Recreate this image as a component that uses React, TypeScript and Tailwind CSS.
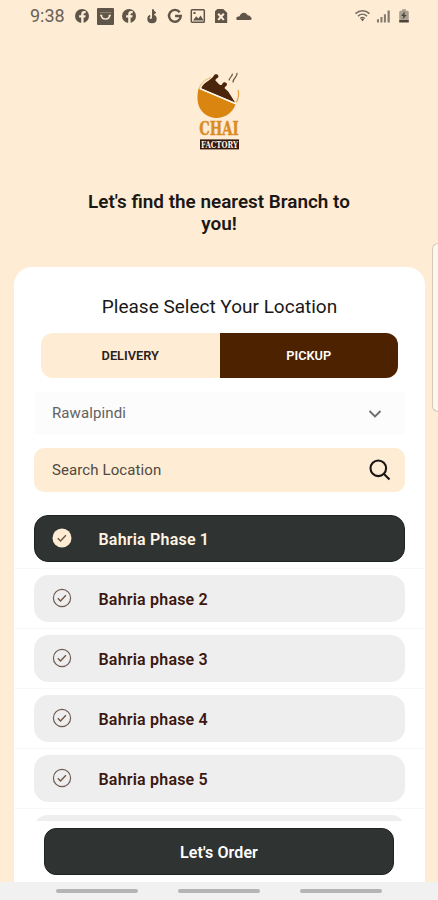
import { ReactNode } from "react"

const branches = [
  "Bahria Phase 1",
  "Bahria phase 2",
  "Bahria phase 3",
  "Bahria phase 4",
  "Bahria phase 5",
]

const Glyph = ({ children, className }: { children: ReactNode; className?: string }) => (
  <svg viewBox="0 0 16 16" className={className ?? "h-4 w-4"} fill="#5f5548">
    {children}
  </svg>
)

const FacebookGlyph = () => (
  <Glyph>
    <circle cx="8" cy="8" r="7" />
    <path d="M7.2 15V9.6H5.1V7.2h2.1V6c0-2 1.1-3.1 2.9-3.1h1.6v2.3h-1c-.8 0-1.1.4-1.1 1v1h2.1l-.4 2.4H9.6V15z" fill="#feecd4" />
  </Glyph>
)

const StatusBar = () => (
  <div className="flex h-8 items-center pl-[30px] pr-[26px] text-[#6b6257]">
    <span className="w-[44px] whitespace-nowrap text-[18px] leading-none">9:38</span>
    <div className="flex items-center gap-[7px]">
      <FacebookGlyph />
      <Glyph className="h-[17px] w-[17px]">
        <rect width="16" height="16" rx="1" />
        <path d="M2.5 4.3h11" fill="none" stroke="#8d8172" strokeWidth="1" />
        <path d="M4 6.5c.3 5.3 7.7 5.3 8 0M3 7h2M11 7h2" fill="none" stroke="#feecd4" strokeWidth="1.3" />
      </Glyph>
      <FacebookGlyph />
      <Glyph>
        <path d="M8 1.2h1.7c.3 1.8 1.2 2.5 2.4 3.1L11 6.2l-.9-.4v1.3c1.8.7 2.6 1.9 2.6 3.8A4.6 4.6 0 0 1 8 15.2a4.6 4.6 0 0 1-4.7-4.3c0-2 1-3.5 2.7-4.2l.5 2c-.9.4-1 1-.8 1.6.5 1 2.3.7 2.3-.8z" />
      </Glyph>
      <Glyph>
        <path d="M12.7 4.3A5.9 5.9 0 1 0 13.8 8H8.1" fill="none" stroke="#5f5548" strokeWidth="2.4" />
      </Glyph>
      <Glyph>
        <rect x="1.3" y="1.8" width="13" height="12.4" rx=".8" fill="none" stroke="#5f5548" strokeWidth="1.5" />
        <path d="m3 12.5 3.2-4.3 2.2 2.3 2.2-3 3 5zM3.5 4h2v2h-2z" />
      </Glyph>
      <Glyph>
        <path d="M4.4 1h5.8l4 3.8V15H2V3.3z" />
        <path d="m5.2 5.7 5.6 6.2m0-6.2-5.6 6.2" stroke="#feecd4" strokeWidth="2.1" />
      </Glyph>
      <Glyph>
        <path d="M1.6 12C0 11.7-.1 9.7 1 9c.9-.6 1.8-.8 2.6-.8.8-2 2.2-3.4 4.3-3.4 1.7 0 3 .9 3.7 2.4 1.6 0 2.8.8 3.2 2.1 1.3.7 1.1 2.4-.4 2.7z" />
      </Glyph>
    </div>
    <div className="ml-auto flex items-center gap-[5px]">
      <Glyph className="h-4 w-[17px]">
        <g fill="none" stroke="#776e63" strokeWidth="1.5">
          <path d="M1 5.6c4-3.8 10-3.8 14 0M3.4 8.2c2.7-2.5 6.5-2.5 9.2 0" />
          <path d="M5.7 10.5c1.3-1.2 3.3-1.2 4.6 0" />
        </g>
        <path d="m6.4 11.5 1.6-.9 1.6.9L8 13.3z" />
      </Glyph>
      <Glyph className="h-4 w-[15px]">
        <path d="M1 11.5h2.2V15H1zM4.7 9h2.2v6H4.7zM8.4 6h2.2v9H8.4zM12.3 2h2.4v13h-2.4z" fill="#857b6e" />
      </Glyph>
      <Glyph>
        <path d="M6 1.3h4v1.4h1.2c.9 0 1.6.7 1.6 1.6v7.1H3.2V4.3c0-.9.7-1.6 1.6-1.6H6z" fill="#aaa091" />
        <path d="M8.7 3.4 5.2 8h2.2l-.8 3.3L10.8 7H8.4zM3.2 11.8h9.6v2.7H3.2z" fill="#4c443a" />
      </Glyph>
    </div>
  </div>
)

const Logo = () => (
  <svg viewBox="0 0 46 82" className="mx-auto h-[82px] w-[46px] overflow-visible">
    {/* Cup */}
    <path d="M15 7.5C8.5 9.5 4 14 3 19.5" fill="none" stroke="#e9b566" strokeWidth="1" />
    <path d="M2.6 18.5 39.5 34.6C34.5 49.5 15 52.6 5.8 41 1 35 .6 27 2.6 18.5z" fill="#da850f" />
    <path d="M5.2 18.2c1.3-3 3.8-5.8 7.6-7.8 2.2-1.3 3.8-2.3 5.2-4.8.7-2 4.2-1.8 4.4.6.1 2.2-2.9 2-3 4.2l4.2 4.3c1.6.8 2.2.4 2.9-1.2 1.2-2.1 4.9-1.2 4.5 1.3-.4 1.9-2.6 1.7-2.4 3.5l3.6 3.2 7.1 11.2z" fill="#4b240c" />
    <path d="M3.8 18.6 39.8 33.6" stroke="#fff8e9" strokeWidth="1.3" />
    <path d="M40.2 32.5c2.5-4.2 3-8.3 1.9-12.5" fill="none" stroke="#e7a044" strokeWidth="1.2" />
    {/* Steam */}
    <g fill="none" stroke="#6b5542" strokeWidth="1.2">
      <path d="M33.3 10.5c-.8-3.1 3.8-3.6 3-6.8M37 12.5c-.8-4.4 5-5.2 4-9.7" />
    </g>
    <text x="3.3" y="65" textLength="39.5" lengthAdjust="spacingAndGlyphs" fill="#da8b22" stroke="#da8b22" strokeWidth=".4" className="font-['DejaVu_Serif',serif] text-[18px] font-bold">CHAI</text>
    <rect x="4" y="69.4" width="39" height="10" fill="#35180d" />
    <text x="5" y="77.8" textLength="37" lengthAdjust="spacingAndGlyphs" fill="#fff4e3" className="font-['DejaVu_Serif',serif] text-[9.5px] font-bold">FACTORY</text>
  </svg>
)

const CheckCircle = ({ active }: { active: boolean }) => (
  <svg viewBox="0 0 20 20" className="relative -top-px h-5 w-5 shrink-0" fill="none">
    <circle cx="10" cy="10" r={active ? 9.5 : 8.6} fill={active ? "#feecd4" : "none"} stroke={active ? "none" : "#6e5d53"} strokeWidth="1.2" />
    <path d="m5.8 10.3 2.7 2.6 5.4-5.7" stroke="#6e5543" strokeWidth="1.4" />
  </svg>
)

const BranchRow = ({ name, active }: { name: string; active: boolean }) => (
  <div className="border-b border-[#f8f8f8] px-5 py-1.5">
    <div
      className={
        active
          ? "flex h-[47px] items-center rounded-[14px] border border-[#1d2423] bg-[#2f3432] pl-[17px] text-[#fff3e2]"
          : "flex h-[47px] items-center rounded-[14px] border border-[#eee] bg-[#eee] pl-[17px] text-[#3c1710]"
      }
    >
      <CheckCircle active={active} />
      <span className="ml-[26.5px] mt-0.5 text-[16px] font-semibold tracking-[0.2px]">{name}</span>
    </div>
  </div>
)

const App = () => {
  return (
    <div className="relative flex h-[900px] w-[438px] flex-col overflow-hidden bg-[#feecd4] font-[Roboto,sans-serif]">
      <StatusBar />

      <div className="h-[159px] pt-[38px]">
        <Logo />
      </div>
      <h1 className="mx-auto h-[76px] w-[290px] text-center text-[18.9px] font-semibold leading-[22px] text-[#1b1714]">
        Let's find the nearest Branch to you!
      </h1>

      {/* Location card */}
      <div className="ml-[14px] mr-[13px] flex h-[615px] flex-col rounded-t-[18px] bg-white">
        <h2 className="h-[66px] pt-[27px] text-center text-[19px] leading-[26px] text-[#191919]">
          Please Select Your Location
        </h2>

        <div className="mx-[27px] flex h-[45px] shrink-0 overflow-hidden rounded-[12px] text-[12.8px] font-semibold">
          <div className="flex flex-1 items-center justify-center bg-[#feecd4] pt-px text-[#2a211b]">DELIVERY</div>
          <div className="flex flex-1 items-center justify-center bg-[#4d2200] pt-px text-white">PICKUP</div>
        </div>

        <div className="mx-5 mt-[14px] flex h-[42px] shrink-0 items-center justify-between bg-[#fcfcfc] pl-[18px] pr-[23px] text-[15px] text-[#626262]">
          <span className="tracking-[0.1px]">Rawalpindi</span>
          <svg viewBox="0 0 14 10" className="relative top-px h-[10px] w-[14px]" fill="none" stroke="#6d6d6d" strokeWidth="1.9">
            <path d="m1.5 2 5.5 5.5L12.5 2" />
          </svg>
        </div>

        <div className="mx-5 mt-[14px] flex h-[44px] shrink-0 items-center justify-between rounded-[10px] bg-[#feecd4] pl-[18px] pr-[14px] text-[15px] text-[#504940]">
          <span className="tracking-[0.1px]">Search Location</span>
          <svg viewBox="0 0 22 22" className="h-[22px] w-[22px]" fill="none" stroke="#191614" strokeWidth="2.1">
            <circle cx="9.3" cy="9.3" r="7.8" />
            <path d="m15 15 5.5 5.5" />
          </svg>
        </div>

        <div className="mt-[17px] h-[312px] shrink-0 overflow-hidden">
          {branches.map((name, i) => (
            <BranchRow key={name} name={name} active={i === 0} />
          ))}
          {/* Top of the next row, scrolled under the button */}
          <div className="mx-5 mt-1.5 h-[47px] rounded-[14px] bg-[#eee]" />
        </div>

        <button className="ml-[30px] mr-[31px] mt-[7px] h-[47px] shrink-0 rounded-[12px] border border-[#1d2423] bg-[#2f3432] pt-0.5 text-[16px] font-semibold tracking-[0.1px] text-white">
          Let's Order
        </button>
      </div>

      {/* Gesture bar */}
      <div className="flex h-[18px] justify-center gap-[40px] bg-[#f1f1f1] pt-[7px]">
        <div className="h-1 w-[82px] rounded-full bg-[#b5b5b5]" />
        <div className="h-1 w-[82px] rounded-full bg-[#b5b5b5]" />
        <div className="h-1 w-[82px] rounded-full bg-[#b5b5b5]" />
      </div>

      {/* Edge panel handle */}
      <div className="absolute right-0 top-[243px] h-[169px] w-[6px] rounded-l-[6px] border border-r-0 border-[#d5c9b9] bg-[#fef7ed]" />
    </div>
  )
}

export default App
